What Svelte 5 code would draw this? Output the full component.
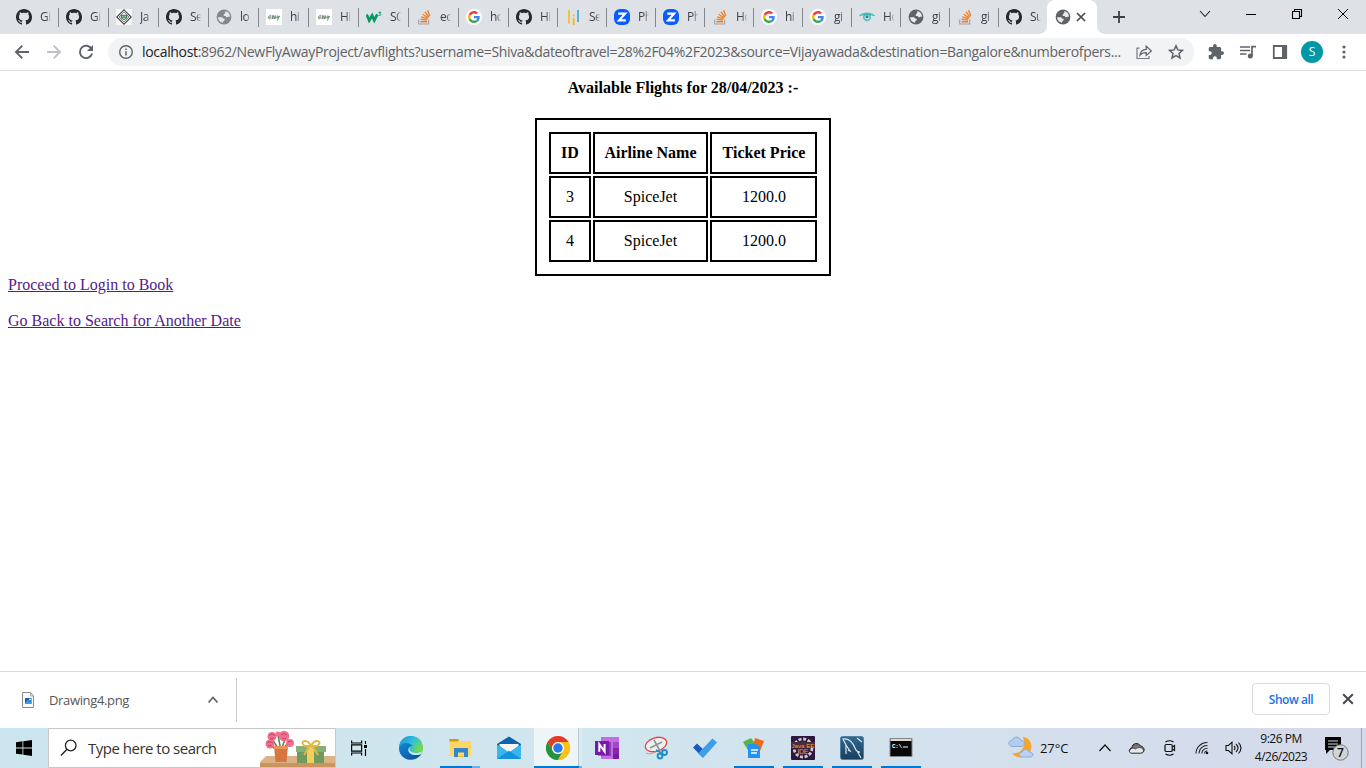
<script>
  const svg = (vb, body) => `<svg viewBox="${vb}" width="100%" height="100%" fill="none" style="display:block">${body}</svg>`;

  const icons = {
    github: svg('0 0 16 16', '<path fill="#24292f" d="M8 0C3.58 0 0 3.58 0 8c0 3.54 2.29 6.53 5.47 7.59.4.07.55-.17.55-.38 0-.19-.01-.82-.01-1.49-2.01.37-2.53-.49-2.69-.94-.09-.23-.48-.94-.82-1.13-.28-.15-.68-.52-.01-.53.63-.01 1.08.58 1.23.82.72 1.21 1.87.87 2.33.66.07-.52.28-.87.51-1.07-1.78-.2-3.64-.89-3.64-3.95 0-.87.31-1.59.82-2.15-.08-.2-.36-1.02.08-2.12 0 0 .67-.21 2.2.82.64-.18 1.32-.27 2-.27s1.36.09 2 .27c1.53-1.04 2.2-.82 2.2-.82.44 1.1.16 1.92.08 2.12.51.56.82 1.27.82 2.15 0 3.07-1.87 3.75-3.65 3.95.29.25.54.73.54 1.48 0 1.07-.01 1.93-.01 2.2 0 .21.15.46.55.38A8.01 8.01 0 0 0 16 8c0-4.42-3.58-8-8-8z"/>'),
    diamond: svg('0 0 16 16', '<path fill="#f5f5f5" d="M0 0h16v16H0z"/><path d="M8 .8 15.2 8 8 15.2.8 8z" fill="#fff" stroke="#444" stroke-width="1.1"/><path d="M8 3 13 8l-5 5-5-5z" stroke="#666" stroke-width=".8"/><path d="M5 6.2h6v2.6L8 11 5 8.8z" fill="#3e8d58" stroke="#285c3a" stroke-width=".6"/><path d="M6.2 7.6h1m1.6 0h1M7 9.2h2" stroke="#d8eadc"/>'),
    globe: svg('0 0 16 16', '<circle cx="8" cy="8" r="7.4" fill="#5f6368"/><path fill="#e8eaed" d="M9.4 2.1c2.4.5 4.3 2.6 4.6 5.1-.7.9-1.6.3-2.2.8-.5.5-1.5.4-1.7-.3-.2-.8-1-.5-1.7-.6-1-.2-1.1-1.3-.3-1.8.5-.3.4-1.1 1-1.3.7-.3.1-1.2.3-1.9zM2 8.2h3.4c1 0 1.3.5 1.6 1.1.3.5 1.4.3 1.7 1 .3.8-.2 1.3-.9 1.5-.6.2-.4 1.2-.9 2C4.200 13.200 2.100 11 2 8.200z"/>'),
    logicmojo: svg('0 0 16 16', '<path fill="#fff" d="M0 0h16v16H0z"/><path d="M2.400 9.500c1-4 2.700-4.500 2.200-2L3.700 10.500M6.600 6.200 6 10l1.300-3.400.2 3M9.200 6l-.9 4 1.200-2.600.4 2.400M11.500 6.500l-.8 2 2.200-1-1.400 4" stroke="#68786f" stroke-width=".8"/><path d="M2 8.500h1.700M11.500 9.500l2-2.600" stroke="#4aad63" stroke-width="1.500"/>'),
    w3: svg('0 0 16 16', '<path d="m.7 5.400 2.500 6L6.100 6.500l2.200 4.900 3-6" stroke="#059862" stroke-width="2.700"/><path d="M12.600 3.300h2.300l-1.300 1.400c2 0 1.600 2.200-.9 1.600" stroke="#059862"/>'),
    stack: svg('0 0 16 16', '<path d="M2.700 10.600V15h10V10.600" stroke="#a0a6ac" stroke-width="1.200"/><path d="M4.500 12.700h6.600M4.600 10.300l6.500.8M5.300 7.800l6.100 2M6.700 5.200l5.300 3.700M9 2.800l4 5.300M11.600 1.200l2.200 5.700" stroke="#f48024" stroke-width="1.400"/>'),
    google: svg('0 0 48 48', '<circle cx="24" cy="24" r="24" fill="#fff"/><g transform="translate(6 6) scale(.75)"><path fill="#ea4335" d="M24 9.500c3.540 0 6.710 1.220 9.210 3.600l6.850-6.850C35.900 2.380 30.470 0 24 0 14.620 0 6.510 5.380 2.560 13.220l7.980 6.190C12.430 13.720 17.740 9.500 24 9.500z"/><path fill="#4285f4" d="M46.980 24.550c0-1.570-.15-3.090-.38-4.550H24v9.020h12.940c-.58 2.960-2.260 5.480-4.780 7.180l7.730 6c4.510-4.180 7.090-10.360 7.090-17.650z"/><path fill="#fbbc05" d="M10.530 28.590c-.48-1.450-.76-2.990-.76-4.590s.27-3.140.76-4.590l-7.980-6.190C.92 16.460 0 20.120 0 24s.92 7.540 2.560 10.780l7.970-6.190z"/><path fill="#34a853" d="M24 48c6.480 0 11.930-2.130 15.890-5.810l-7.730-6c-2.150 1.450-4.920 2.300-8.160 2.300-6.260 0-11.570-4.220-13.470-9.910l-7.980 6.190C6.510 42.620 14.620 48 24 48z"/></g>'),
    bars: svg('0 0 16 16', '<path d="M4 1v13.500" stroke="#fdb515" stroke-width="1.500"/><path d="M8.700 5.500v2m0 1.500v7" stroke="#fdb515" stroke-width="1.800"/><path d="M13 1v12" stroke="#3eaee2" stroke-width="1.800"/>'),
    z: svg('0 0 16 16', '<rect width="16" height="16" rx="6" fill="#0b5cff"/><path d="M4.300 4.700h6.800l-6 6.600h6.800" stroke="#fff" stroke-width="2.200"/>'),
    eye: svg('0 0 16 16', '<path d="M.3 6.800C4 3.200 12 3.200 15.700 6.800 13 6 12 6 11.500 6h-7C4 6 3 6 .3 6.800z" fill="#44bfbd" stroke="#44bfbd" stroke-width=".8"/><circle cx="8" cy="8" r="3.200" stroke="#36b8b5" stroke-width="1.300"/><circle cx="8" cy="7.800" r="1.500" fill="#168f91"/><path d="m4 8.800 2.100 2.700 2 .8 2-.8L12 8.800" stroke="#75d1cf" stroke-width=".8"/>'),
    back: svg('0 0 16 16', '<path d="M15 8H2M8.300 1.700 2 8l6.300 6.300" stroke="#5f6368" stroke-width="1.900"/>'),
    forward: svg('0 0 16 16', '<path d="M1 8h13M7.700 1.700 14 8l-6.300 6.300" stroke="#bdc1c6" stroke-width="1.800"/>'),
    reload: svg('0 0 16 16', '<path d="M13.600 5A6.200 6.200 0 1 0 14.100 9.600" stroke="#5f6368" stroke-width="1.900"/><path d="M15 1v6H9z" fill="#5f6368"/>'),
    info: svg('0 0 16 16', '<circle cx="8" cy="8" r="6.300" stroke="#5f6368" stroke-width="1.400"/><path d="M8 7.200v4.300M8 4.400v1.500" stroke="#5f6368" stroke-width="1.500"/>'),
    share: svg('0 0 16 16', '<path d="M3.500 4.200H1v10.300h12V12" stroke="#777b80" stroke-width="1.200"/><path d="M4 11.200c.4-4 2.500-5.700 6.200-5.800V2.200L15.500 7l-5.300 4.500V8.600C7.400 8.500 5.500 9.200 4 11.200z" stroke="#5f6368" stroke-width="1.200"/>'),
    star: svg('0 0 16 16', '<path d="m8 1.800 1.800 4.100 4.600.5-3.400 3 1 4.500L8 11.500l-4 2.400 1-4.500-3.400-3 4.600-.5z" stroke="#5f6368" stroke-width="1.500"/>'),
    puzzle: svg('1 1 22 22', '<path fill="#5f6368" d="M20.500 11H19V7c0-1.100-.9-2-2-2h-4V3.500a2.500 2.500 0 0 0-5 0V5H4c-1.100 0-1.990.9-1.990 2v3.800H3.500a2.700 2.700 0 0 1 0 5.400H2V20c0 1.100.9 2 2 2h3.800v-1.500a2.700 2.700 0 0 1 5.400 0V22H17c1.100 0 2-.9 2-2v-4h1.500a2.500 2.500 0 0 0 0-5z"/>'),
    playlist: svg('0 0 16 16', '<path d="M0 3h10M0 6.500h10M0 10h6.500M12 12V2.700h4" stroke="#5f6368" stroke-width="1.700"/><circle cx="10.300" cy="12" r="2.500" fill="#5f6368"/>'),
    panel: svg('0 0 16 16', '<path d="M1.800 2h12.400v12H1.800z" stroke="#5f6368" stroke-width="1.800"/><path fill="#5f6368" d="M10 2h5v12h-5z"/>'),
    dots: svg('0 0 16 16', '<g fill="#5f6368"><circle cx="8" cy="3" r="1.600"/><circle cx="8" cy="8" r="1.600"/><circle cx="8" cy="13" r="1.600"/></g>'),
    close: svg('0 0 10 10', '<path d="m1 1 8 8M9 1 1 9" stroke="#45494d" stroke-width="1.700"/>'),
    plus: svg('0 0 12 12', '<path d="M6 0v12M0 6h12" stroke="#3c4043" stroke-width="1.800"/>'),
    chevDown: svg('0 0 12 12', '<path d="m1 3 5 5.500L11 3" stroke="#202124" stroke-width="1.100"/>'),
    minimize: svg('0 0 12 12', '<path d="M1 6.500h10" stroke="#000"/>'),
    restore: svg('0 0 12 12', '<path d="M1.500 3.500h7v7h-7zM3.500 3.500v-2h7v7h-2" stroke="#000" stroke-width="1.100"/>'),
    winClose: svg('0 0 12 12', '<path d="m1 1 10 10M11 1 1 11" stroke="#000"/>'),
    file: svg('0 0 14 18', '<path d="M1.500 1.500h8L12.500 5v11.500h-11z" fill="#fafafa" stroke="#8b8b8b"/><path d="M9.500 1.500V5h3" stroke="#a4a4a4"/><path fill="#1764b5" d="M4 7h6.500v6H4z"/><path d="m4 12 3-3 2 2 1.500-1v3H4z" fill="#3f9de8"/><circle cx="9" cy="8.500" r="1" fill="#cce9ff"/>'),
    chevUpBold: svg('0 0 12 12', '<path d="m1.500 8.500 4.500-5 4.500 5" stroke="#5f6368" stroke-width="1.700"/>'),
    windows: svg('0 0 16 16', '<path fill="#000" d="m0 2.200 6.500-.9v6.200H0zm7.300-1L16 0v7.500H7.300zM0 8.400h6.500v6.200L0 13.800zm7.300 0H16V16l-8.700-1.200z"/>'),
    search: svg('0 0 18 18', '<circle cx="10.700" cy="6.500" r="5.300" stroke="#222" stroke-width="1.300"/><path d="M7 10.300 1 16.500" stroke="#222" stroke-width="1.400"/>'),
    gift: svg('0 0 75 38', '<path fill="#dcb384" d="M6 27h69v11H0v-5z"/><path fill="#c99462" d="M0 34h75v4H0z"/><g stroke="#55864b" stroke-width="1.500"><path d="m20 22-8-12m9 12-3-16m3 16 5-15m-4 15 7-10M19 22l-8-5"/></g><g fill="#ef718e"><circle cx="12" cy="7.500" r="4.500"/><circle cx="24" cy="7" r="5.300"/><circle cx="10" cy="15" r="4.500"/><circle cx="30" cy="14" r="4"/><circle cx="18" cy="5" r="2.500"/></g><g stroke="#c43b63" stroke-width=".9"><path d="M9 6.500q3-3 6 0M10 9q2 2 4 0M21 6q3-3 6 0M22 9q2 2 4 0M7 14q3-3 6 0M8 16q2 2 4 0M28 13q2-2 4 0"/></g><path d="M14 17h14l-1.500 16h-11z" fill="#d87642"/><path d="M14 17h14v3H14z" fill="#ed9258"/><path fill="#6e9b5d" d="M37 20h27v14H37z"/><path fill="#86b076" d="M36 17h30v6H36z"/><path fill="#f2ce5c" d="M47 17h7v17h-7z"/><path d="M51 17c-4-8-13-5-6 0zm0 0c4-8 13-5 6 0zm-2 1-5 8m9-8 5 8" stroke="#e2b742" stroke-width="2"/>'),
    taskview: svg('0 0 17 16', '<path d="M.6.500V3h10V.500M.600 4.800h10v6.400H.600zM.600 15.500V13h10v2.500M14.500 1v3m0 5v7" stroke="#000" stroke-width="1.200"/><path fill="#000" d="M13 5h3v3h-3z"/>'),
    edge: svg('0 0 24 24', '<defs><linearGradient id="edgeTop" x1="0" y1="0" x2="1" y2=".6"><stop stop-color="#168bd5"/><stop offset=".55" stop-color="#32bfdc"/><stop offset="1" stop-color="#70d94f"/></linearGradient><linearGradient id="edgeBot" x1="0" y1="0" x2="1" y2="1"><stop stop-color="#1688d6"/><stop offset="1" stop-color="#0b4b9b"/></linearGradient></defs><circle cx="12" cy="12" r="12" fill="url(#edgeTop)"/><path d="M0 12C2 5.500 10.500 5.700 14 10c-3-.5-5 1.200-4.500 4 .7 4 6.500 6.300 12.800 4C17 26.500 1 26 0 12z" fill="url(#edgeBot)"/><path d="M14 10c-3-.5-4.500 1.500-3.500 4 1.500 3.500 8 4 12 1.500 0 1-.2 1.800-.6 2.400-6 3-13 0-12.500-4.400.2-2 2-3.800 4.600-3.500z" fill="#c9edf3"/><path d="M14 10c2 2 2 4 0 5 3 1.800 8 .4 9.600-2.400C24 5 19 0 12 0 5 0 1 5 .2 10 4 5 11 5 14 10z" fill="url(#edgeTop)"/>'),
    explorer: svg('0 0 24 24', '<path fill="#e8a51c" d="M1.500 3H10l2 2.500H1.500z"/><path fill="#ffd765" d="M1.500 5H23v15H1.500z"/><path fill="#d99615" d="M1.500 3H10v2.500H1.500z"/><path fill="#3288cf" d="M6 12h14v9h-4v-4.500h-6V21H6z"/><path d="M10 20.500h6" stroke="#f5bc36"/>'),
    mail: svg('0 0 24 24', '<path fill="#0d63ac" d="M0 8 12 .500l12 7.500v5L12 18 0 13z"/><path fill="#f4f5f6" d="M2.500 8h19v2L12 17 2.500 10z"/><path fill="#37b5ed" d="m0 8.500 12 8 12-8V23H0z"/><path fill="#1591df" d="m0 23 12-8.200L24 23z"/>'),
    chrome: svg('0 0 48 48', '<circle cx="24" cy="24" r="24" fill="#fbc116"/><path fill="#e33b2e" d="M3.200 12A24 24 0 0 1 44.800 12H24a12 12 0 0 0-10.400 18z"/><path fill="#229342" d="M3.200 12 13.600 30A12 12 0 0 0 34.400 30L24 48A24 24 0 0 1 3.200 12z"/><path fill="#fbc116" d="M24 12h20.800A24 24 0 0 1 24 48l10.400-18A12 12 0 0 0 24 12z"/><circle cx="24" cy="24" r="12" fill="#fff"/><circle cx="24" cy="24" r="9.500" fill="#267be9"/>'),
    onenote: svg('0 0 24 24', '<path fill="#c46be6" d="M6 1h18v22H6z"/><path fill="#a349c8" d="M18 6h6v6h-6z"/><path fill="#8826a8" d="M18 12h6v6h-6z"/><path fill="#7719aa" d="M18 18h6v5h-6z"/><path fill="#42145e" d="M3 6h13v14H3z" opacity=".45"/><path fill="#7719aa" d="M0 5h14v14H0z"/><path d="M4.300 15.800V8.200l5.300 7.400V8" stroke="#fff" stroke-width="2"/>'),
    snip: svg('0 0 24 24', '<ellipse cx="12" cy="8.500" rx="11" ry="6.700" transform="rotate(-18 12 8.500)" fill="#eef1f1" stroke="#df4850" stroke-width="1.300"/><path d="M2 17c3 2 7 0 10-1" stroke="#e48a90"/><path d="m10 4 6 11M18 6 6 12" stroke="#8b9697" stroke-width="1.600"/><circle cx="16" cy="20" r="2.400" stroke="#218fc5" stroke-width="2"/><circle cx="20.500" cy="16.500" r="2.400" stroke="#218fc5" stroke-width="2"/><path d="m12 14 4 2 1 3" stroke="#218fc5" stroke-width="1.500"/>'),
    todo: svg('0 0 24 24', '<path fill="#195abd" d="m0 11.500 4-4L13 16l-4.500 4.500z"/><path fill="#3e9ee9" d="M8.500 20.500 5.500 17 19.500 2.500 24 6.500 10.500 21.500q-1 .8-2-1z"/>'),
    gallery: svg('0 0 24 24', '<path fill="#55b649" d="m1 6 8-4 6 8-8 6z"/><path fill="#ef6a15" d="m13 2 9 3-4 10-7-5z"/><path fill="#2393f3" d="M6 8h8l4 3v11H6z"/><path d="M9 14h7M9 17h6" stroke="#fff" stroke-width="1.300"/>'),
    javaee: svg('0 0 24 24', '<rect width="24" height="24" rx="1" fill="#2d173c"/><circle cx="12" cy="12" r="9" stroke="#d0c7d3" stroke-width="2.800" stroke-dasharray="3 1.700"/><circle cx="12" cy="12" r="7.200" fill="#382044"/><path fill="#4b2d42" d="M0 6h24v6H0z"/><text x="12" y="11.600" fill="#ff9d20" font-family="Liberation Sans" font-size="6.200" text-anchor="middle" textLength="23">Java EE</text><text x="12" y="17.600" fill="#ff9d20" font-family="Liberation Sans" font-size="7" text-anchor="middle" textLength="11">IDE</text>'),
    mysql: svg('0 0 24 24', '<defs><linearGradient id="sea" x2="0" y2="1"><stop stop-color="#326891"/><stop offset="1" stop-color="#193e5c"/></linearGradient></defs><rect x=".5" y=".5" width="23" height="23" rx="2" fill="url(#sea)" stroke="#537f9f"/><path d="M6 18 6 9 3 3c6-1 10 4 12 9 1 3 3 4 5 4l-2 .7 3 5.300M6 9l4 6-2-1M17 2l5 4" stroke="#d7e5ed" stroke-width="1.200"/>'),
    cmd: svg('0 0 24 24', '<path fill="#080808" stroke="#858585" d="M1 2.500h22v18H1z"/><path fill="#d8d8d8" d="M1.500 3h21v2h-21z"/><text x="3" y="11.500" fill="#fff" font-family="Liberation Mono" font-size="6" font-weight="700" textLength="10">C:\\</text><path d="M14 11h5" stroke="#fff"/>'),
    weather: svg('0 0 26 24', '<path d="M15 1c8 1 11 10 6 16-4 6-13 6-17 0 8 2 15-6 11-16z" fill="#f7a529"/><path d="M4 10.500c-6-2-2-7 0-6 2-5 8-4 9 0 5 0 4 6 0 6z" fill="#b4ccf0" stroke="#8aabdb"/><path d="M14 21c-5-1-2-5 0-5 2-4 6-3 7 0 5 0 5 5 1 5z" fill="#b9cff3" stroke="#8dafe0"/>'),
    chevUp: svg('0 0 12 12', '<path d="m.5 9 5.500-6 5.500 6" stroke="#111" stroke-width="1.200"/>'),
    cloud: svg('0 0 16 12', '<path d="M3.500 11C-.5 11 .3 6 3.500 6 3.500.8 10 .2 12 4c5 1 4.500 7 .5 7z" fill="#777" stroke="#171717"/><path d="M1 9.500C1.500 6 5 5.500 7 7c3-2 6-2 8 1 0 2-1 3-3 3H4c-2 0-3-.5-3-1.500z" fill="#e8e8e8" stroke="#222" stroke-width=".6"/>'),
    camera: svg('0 0 12 16', '<rect x="1" y="4.500" width="7.200" height="7" rx="1.300" stroke="#111" stroke-width="1.200"/><path d="m8.200 7 2.300-1.500v5L8.200 9M1.500 2Q5.500-.500 9.500 2M1.500 14Q5.500 16.500 9.500 14" stroke="#111" stroke-width="1.200"/>'),
    wifi: svg('0 0 14 14', '<g stroke="#222" stroke-width="1.050"><path d="M1 12.500A11 11 0 0 1 12.500 1.500M4 12.500A8 8 0 0 1 12.500 4.500M6.800 12.500A5.500 5.500 0 0 1 12.500 7.300M9.300 12.500q.5-2.500 3-2.800"/></g><circle cx="12" cy="12" r="1.300" fill="#111"/>'),
    sound: svg('0 0 18 14', '<path d="M1 4.500h2.500L7 1.200v11.600L3.500 9.500H1zM9 5q2 2 0 4M11 3q4 4 0 8M13.500 1.500q5 5.500 0 11" stroke="#111" stroke-width="1.100"/>'),
    notice: svg('0 0 25 25', '<path fill="#000" d="M1 1h16v13H6l-4 4v-4H1z"/><path d="M4 5h10M4 8h10M4 11h7" stroke="#d4dbe9"/><circle cx="16.500" cy="16.500" r="7.700" fill="#d1d3d5" stroke="#76797c"/><text x="16.500" y="20.800" font-family="Open Sans" font-size="12" font-weight="600" fill="#111" text-anchor="middle">7</text>'),
  };

  const tabs = [
    ['github', 'Gi'], ['github', 'Gi'], ['diamond', 'Ja'], ['github', 'Se'], ['globe', 'lo'],
    ['logicmojo', 'hi'], ['logicmojo', 'Hi'], ['w3', 'SC'], ['stack', 'ec'], ['google', 'hc'],
    ['github', 'Hi'], ['bars', 'Se'], ['z', 'Ph'], ['z', 'Ph'], ['stack', 'Ho'],
    ['google', 'hi'], ['google', 'gi'], ['eye', 'Ho'], ['globe', 'gi'], ['stack', 'gi'], ['github', 'Su'],
  ].map(([icon, title], i) => ({ icon, title, wide: i < 10, last: i === 20, pale: i === 4 }));

  const flights = [
    { id: 3, airline: 'SpiceJet', price: '1200.0' },
    { id: 4, airline: 'SpiceJet', price: '1200.0' },
  ];

  const apps = [
    ['edge', ''], ['explorer', 'multi'], ['mail', ''], ['chrome', 'active'], ['onenote', ''], ['snip', ''],
    ['todo', ''], ['gallery', 'open'], ['javaee', 'open'], ['mysql', 'open'], ['cmd', 'open'],
  ];
</script>

{#snippet icon(name, size = 16, height = size)}
  <span class="icon" style="width:{size}px;height:{height}px">{@html icons[name]}</span>
{/snippet}

<div class="screen">
  <header class="tabstrip">
    {#each tabs as tab}
      <div class="tab" class:wide={tab.wide} class:last={tab.last} class:pale={tab.pale}>
        {@render icon(tab.icon)}
        <span class="tab-title">{tab.title}</span>
      </div>
    {/each}
    <div class="tab-active">
      {@render icon('globe', 16)}
      {@render icon('close', 10)}
    </div>
    <div class="plus">{@render icon('plus', 12)}</div>
    <div class="controls">
      {@render icon('chevDown', 12)}
      {@render icon('minimize', 12)}
      {@render icon('restore', 12)}
      {@render icon('winClose', 12)}
    </div>
  </header>

  <nav class="toolbar">
    <div class="nav-buttons">
      {@render icon('back')}
      {@render icon('forward')}
      {@render icon('reload')}
    </div>
    <div class="omnibox">
      {@render icon('info')}
      <span class="url"><b>localhost</b>:8962/NewFlyAwayProject/avflights?username=Shiva&amp;dateoftravel=28%2F04%2F2023&amp;source=Vijayawada&amp;destination=Bangalore&amp;numberofpers...</span>
      <div class="url-actions">{@render icon('share')}{@render icon('star')}</div>
    </div>
    <div class="extensions">
      {@render icon('puzzle')}
      {@render icon('playlist')}
      {@render icon('panel')}
      <span class="avatar">S</span>
      {@render icon('dots')}
    </div>
  </nav>

  <main>
    <h1>Available Flights for 28/04/2023 :-</h1>
    <table>
      <colgroup><col class="c-id" /><col class="c-name" /><col class="c-price" /></colgroup>
      <thead><tr><th>ID</th><th>Airline Name</th><th>Ticket Price</th></tr></thead>
      <tbody>
        {#each flights as f}
          <tr><td>{f.id}</td><td>{f.airline}</td><td>{f.price}</td></tr>
        {/each}
      </tbody>
    </table>
    <p><a href="#login">Proceed to Login to Book</a></p>
    <p><a href="#search">Go Back to Search for Another Date</a></p>
  </main>

  <section class="shelf">
    <div class="download">
      {@render icon('file', 14, 18)}
      <span class="filename">Drawing4.png</span>
      {@render icon('chevUpBold', 12)}
    </div>
    <button>Show all</button>
    {@render icon('close', 12)}
  </section>

  <footer class="taskbar">
    <div class="start">{@render icon('windows')}</div>
    <div class="search">
      {@render icon('search', 18)}
      <span>Type here to search</span>
      {@render icon('gift', 75, 38)}
    </div>
    <div class="view">{@render icon('taskview', 17, 16)}</div>
    <div class="apps">
      {#each apps as [name, state]}
        <div class="app {state}">{@render icon(name, 24)}</div>
      {/each}
    </div>
    <div class="tray">
      {@render icon('weather', 26, 24)}
      <span class="temp">27°C</span>
      {@render icon('chevUp', 12)}
      {@render icon('cloud', 17, 12)}
      {@render icon('camera', 12, 16)}
      {@render icon('wifi', 14)}
      {@render icon('sound', 18, 14)}
      <div class="clock"><span class="time">9:26 PM</span><span class="date">4/26/2023</span></div>
      {@render icon('notice', 25)}
      <i class="desktop-edge"></i>
    </div>
  </footer>
</div>

<style>
  :global(body) { margin: 0; background: #fff; }
  .screen { width: 1366px; height: 768px; display: flex; flex-direction: column; overflow: hidden; font-family: "Open Sans", "Noto Sans", sans-serif; background: #fff; }
  .icon { display: block; flex: none; }
  .tabstrip { height: 34px; flex: none; display: flex; background: #dee1e6; padding-left: 8px; box-sizing: border-box; }
  .tab { width: 49px; height: 34px; box-sizing: border-box; padding-left: 8px; display: flex; align-items: center; position: relative; flex: none; }
  .tab.wide { width: 50px; }
  .tab::after { content: ""; position: absolute; right: -1px; top: 8px; width: 1px; height: 19px; background: #83878c; }
  .tab.last::after { right: 0; top: auto; bottom: 0; width: 8px; height: 8px; background: radial-gradient(circle at 0 0, transparent 7.5px, #fff 8.5px); }
  .tab.pale .icon { opacity: .7; }
  .tab-title { margin-left: 8px; width: 13px; white-space: nowrap; font-size: 12px; line-height: 18px; letter-spacing: -.5px; color: #3c4043; mask-image: linear-gradient(90deg, #000 45%, transparent 88%); }
  .tab-active { width: 50px; height: 34px; flex: none; box-sizing: border-box; background: #fff; border-radius: 8px 8px 0 0; display: flex; align-items: center; padding-left: 8px; gap: 5px; }
  .plus { width: 44px; display: flex; align-items: center; justify-content: center; position: relative; }
  .plus::before { content: ""; position: absolute; left: 0; bottom: 0; width: 8px; height: 8px; background: radial-gradient(circle at 100% 0, transparent 7.5px, #fff 8.5px); }
  .controls { margin-left: 58px; height: 28px; display: flex; align-items: center; gap: 34px; }
  .toolbar { height: 37px; flex: none; box-sizing: border-box; border-bottom: 1px solid #dadce0; display: flex; align-items: center; background: #fff; }
  .nav-buttons { display: flex; gap: 16px; padding-left: 14px; width: 94px; flex: none; }
  .omnibox { width: 1086px; height: 28px; border-radius: 14px; background: #f1f3f4; display: flex; align-items: center; padding: 0 10px; box-sizing: border-box; flex: none; }
  .url { width: 980px; margin-left: 8px; font-size: 14px; letter-spacing: -.325px; color: #5f6368; white-space: nowrap; line-height: 20px; }
  .url b { font-weight: 400; color: #202124; }
  .url-actions { display: flex; gap: 16px; margin-left: auto; }
  .extensions { display: flex; align-items: center; gap: 16px; padding-left: 14px; }
  .avatar { width: 22px; height: 22px; margin: 0 -3px; border-radius: 50%; background: #0097a7; color: #fff; font-size: 12px; line-height: 22px; text-align: center; }
  main { height: 600px; flex: none; box-sizing: border-box; padding: 8px; font: 16px/18px "Liberation Serif", serif; color: #000; }
  h1 { margin: 0 0 21px; font-size: 16px; line-height: 18px; text-align: center; }
  table { table-layout: fixed; width: 296px; margin: 0 auto; border: 2px solid #000; padding: 10px; border-spacing: 2px; text-align: center; box-sizing: border-box; }
  th, td { border: 2px solid #000; padding: 10px 0; height: 18px; box-sizing: content-box; }
  th:last-child, td:last-child { padding-left: 1px; }
  .c-id { width: 42px; }
  .c-name { width: 115px; }
  .c-price { width: 107px; }
  p { margin: 0 0 18px; }
  a { color: #551a8b; }
  .shelf { height: 57px; flex: none; box-sizing: border-box; border-top: 1px solid #dadce0; display: flex; align-items: center; padding-right: 12px; }
  .shelf > .icon { margin-bottom: 2px; }
  .download { width: 237px; height: 44px; box-sizing: border-box; border-right: 1px solid #c9cbce; display: flex; align-items: center; padding: 0 17px 0 21px; margin-right: auto; }
  .filename { font-size: 13px; color: #54585d; margin-left: 14px; margin-right: auto; letter-spacing: -.35px; }
  button { width: 78px; height: 32px; border: 1px solid #dadce0; border-radius: 4px; background: #fff; color: #1a73e8; font: 600 12px "Open Sans", sans-serif; letter-spacing: -.45px; padding: 0; margin: 0 12px 2px 0; }
  .taskbar { height: 40px; flex: none; display: flex; align-items: center; background: linear-gradient(90deg, #cde5ee, #d1e6ef 45%, #d4e0ed 70%, #d4daea); color: #111; }
  .start { width: 48px; display: flex; justify-content: center; }
  .search { width: 288px; height: 40px; box-sizing: border-box; border: 1px solid #c6c9ca; background: #fff; display: flex; align-items: center; padding-left: 11px; font-size: 15px; color: #333; letter-spacing: -.5px; }
  .search > span:nth-child(2) { margin-left: 10px; margin-right: auto; white-space: nowrap; }
  .view { width: 50px; box-sizing: border-box; padding-left: 15px; }
  .apps { display: flex; height: 40px; }
  .app { width: 49px; height: 40px; display: flex; align-items: center; justify-content: center; position: relative; }
  .app.open::after, .app.multi::after { content: ""; position: absolute; left: 5px; bottom: 0; width: 40px; height: 2px; background: #0078d7; }
  .app.multi::after { background: linear-gradient(90deg, #0078d7 32px, #6eaee2 32px); }
  .app.active { background: linear-gradient(90deg, transparent 1px, #edf5f9 1px 45px, #b8c7d1 45px 46px, #dcebf2 46px); }
  .app.active::after { content: ""; position: absolute; left: 1px; bottom: 0; width: 48px; height: 2px; background: linear-gradient(90deg, #0078d7 45px, #6eaee2 45px); }
  .tray { display: flex; align-items: center; margin-left: auto; height: 40px; }
  .temp { width: 32px; margin: 0 27px 0 6px; font-size: 13px; letter-spacing: -.1px; }
  .tray > .icon:nth-child(4) { margin-left: 17px; }
  .tray > .icon:nth-child(5) { margin-left: 19px; }
  .tray > .icon:nth-child(6) { margin-left: 19px; }
  .tray > .icon:nth-child(7) { margin-left: 16px; }
  .clock { width: 54px; margin: 0 16px 0 11px; display: flex; flex-direction: column; align-items: center; font-size: 12px; line-height: 18px; letter-spacing: -.5px; white-space: nowrap; }
  .desktop-edge { width: 1px; height: 40px; margin: 0 4px 0 12px; background: #9fa7b1; }
</style>
